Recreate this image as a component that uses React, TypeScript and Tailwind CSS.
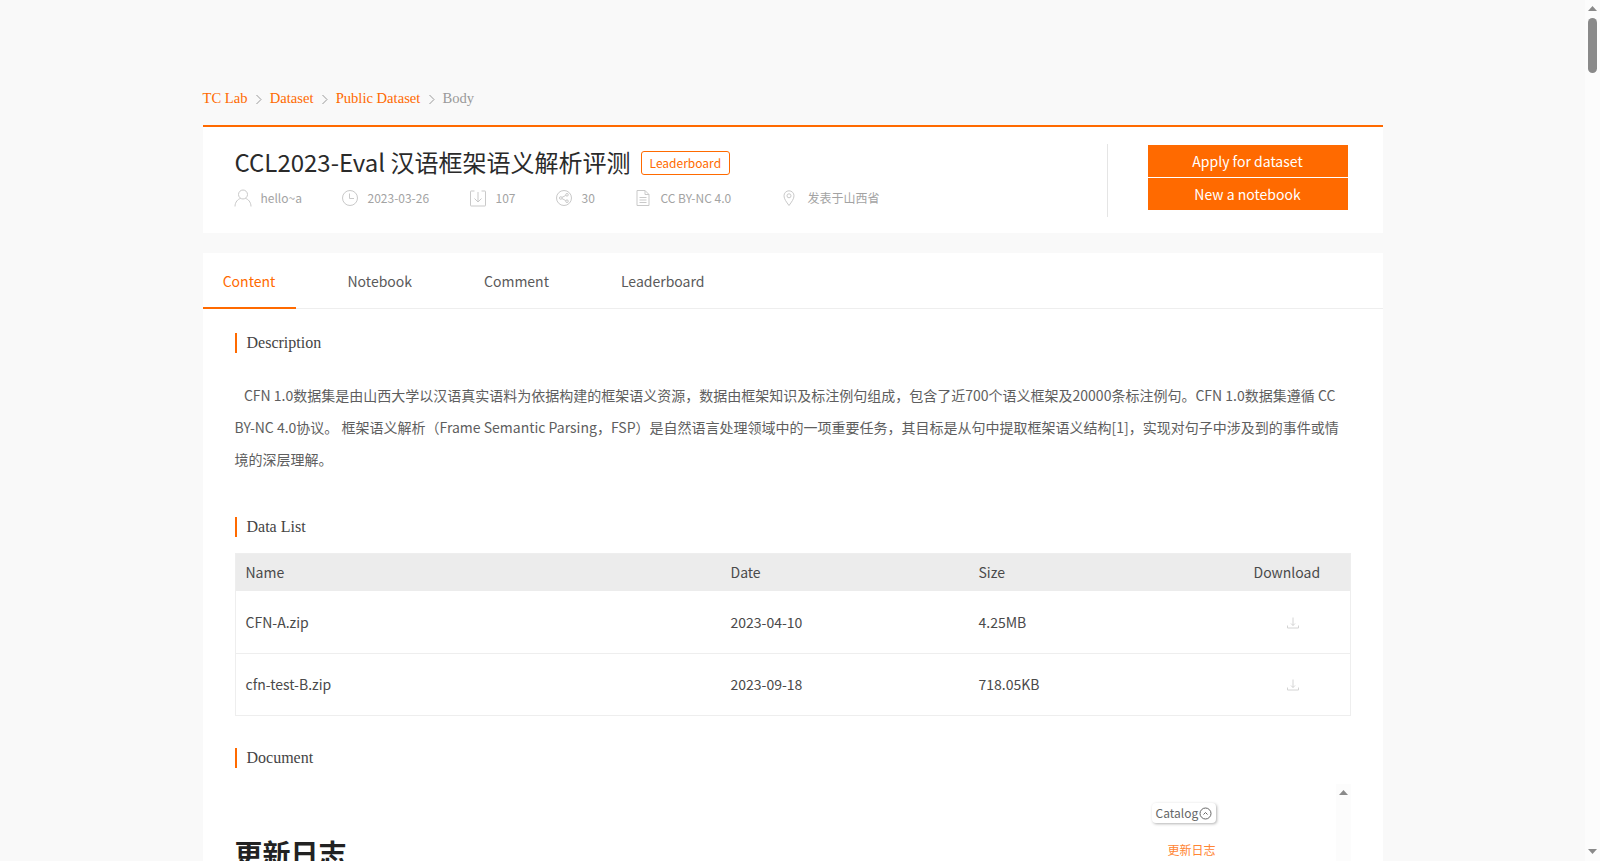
function UserIcon() {
  return (
    <svg width="18" height="18" viewBox="0 0 18 18" fill="none" stroke="#c9c9c9" strokeWidth="1">
      <circle cx="9" cy="5.5" r="4.5" />
      <path d="M1 17.5c0-4.5 3-7.5 5.500-8M17 17.500c0-4.500-3-7.500-5.500-8" />
    </svg>
  );
}

function ClockIcon() {
  return (
    <svg width="18" height="18" viewBox="0 0 18 18" fill="none" stroke="#c9c9c9" strokeWidth="1">
      <circle cx="9" cy="9" r="7.500" />
      <path d="M8.500 4.500v5h4.500" />
    </svg>
  );
}

function DownIcon() {
  return (
    <svg width="18" height="18" viewBox="0 0 18 18" fill="none" stroke="#c9c9c9" strokeWidth="1">
      <path d="M5.500 2H2a.5.5 0 0 0-.5.5V16.500a.5.5 0 0 0 .5.500h14a.5.5 0 0 0 .5-.5V2.500A.5.500 0 0 0 16 2h-3.500" />
      <path d="M9 3v10M5.500 9.500 9 13l3.500-3.500" />
    </svg>
  );
}

function ShareIcon() {
  return (
    <svg width="18" height="18" viewBox="0 0 18 18" fill="none" stroke="#c9c9c9" strokeWidth="1">
      <circle cx="9" cy="9" r="7.500" />
      <circle cx="5.800" cy="9" r="1.300" />
      <circle cx="12" cy="5.800" r="1.300" />
      <circle cx="12" cy="12.200" r="1.300" />
      <path d="M7 8.400 10.800 6.400M7 9.600l3.800 2" />
    </svg>
  );
}

function FileIcon() {
  return (
    <svg width="18" height="18" viewBox="0 0 18 18" fill="none" stroke="#c9c9c9" strokeWidth="1">
      <path d="M3 1.500h8l4 4v11H3zM11 1.500v4h4" />
      <path d="M5.500 8.500h7M5.500 11h7M5.500 13.500h7" />
    </svg>
  );
}

function PinIcon() {
  return (
    <svg width="14" height="18" viewBox="0 0 14 18" fill="none" stroke="#c9c9c9" strokeWidth="1">
      <path d="M7 16.500C4.500 13 2 10 2 6.800a5 5 0 0 1 10 0C12 10 9.500 13 7 16.500z" />
      <circle cx="7" cy="6.800" r="2" />
    </svg>
  );
}

function TrayIcon() {
  return (
    <svg width="14" height="14" viewBox="0 0 14 14" fill="none" stroke="#d4d4d4" strokeWidth="1">
      <path d="M7 1.500v8M5 7.500l2 2 2-2" />
      <path d="M1.500 9.500v2.500h11V9.500" />
    </svg>
  );
}

function Chevron() {
  return (
    <svg width="9" height="11" viewBox="0 0 9 11" fill="none" stroke="#9a9a9a" strokeWidth="1">
      <path d="M2.500 1l4.500 4.500-4.500 4.500" />
    </svg>
  );
}

function ArrowUp() {
  return (
    <svg width="9" height="5" viewBox="0 0 9 5" fill="#8a8a8a">
      <path d="M4.500 0 9 5H0z" />
    </svg>
  );
}

function ArrowDown() {
  return (
    <svg width="9" height="5" viewBox="0 0 9 5" fill="#8a8a8a">
      <path d="M0 0h9L4.500 5z" />
    </svg>
  );
}

function SectionTitle({ children }: { children: string }) {
  return (
    <h3 className="flex h-5 items-center border-l-2 border-[#ff6a00] pl-[10px] font-['Liberation_Serif',serif] text-base text-[#444]">
      {children}
    </h3>
  );
}

const metas = [
  { icon: <UserIcon />, text: "hello~a", cls: "w-[107px] gap-[9px]" },
  { icon: <ClockIcon />, text: "2023-03-26", cls: "w-[128px] gap-[9px]" },
  { icon: <DownIcon />, text: "107", cls: "w-[86px] gap-[9px]" },
  { icon: <ShareIcon />, text: "30", cls: "w-[79px] gap-[9px]" },
  { icon: <FileIcon />, text: "CC BY-NC 4.0", cls: "w-[148px] gap-[9px]" },
  { icon: <PinIcon />, text: "发表于山西省", cls: "w-[120px] gap-3" },
];

const files = [
  { name: "CFN-A.zip", date: "2023-04-10", size: "4.25MB" },
  { name: "cfn-test-B.zip", date: "2023-09-18", size: "718.05KB" },
];

export default function App() {
  return (
    <div className="flex h-screen overflow-hidden bg-[#f9f9f9] font-['Noto_Sans_CJK_SC','Noto_Sans',sans-serif] text-[#333]">
      <main className="min-w-0 flex-1">
        <div className="mx-auto w-[1180px] pt-[89px]">
          <nav className="flex h-5 items-center font-['Liberation_Serif',serif] text-[14.6px] text-[#ff6a00]">
            <span>TC Lab</span>
            <span className="mx-[6.6px]"><Chevron /></span>
            <span>Dataset</span>
            <span className="mx-[6.6px]"><Chevron /></span>
            <span>Public Dataset</span>
            <span className="mx-[6.6px]"><Chevron /></span>
            <span className="text-[#999]">Body</span>
          </nav>

          <section className="mt-4 flex h-[108px] border-t-2 border-[#ff6a00] bg-white pl-8 pr-[35px]">
            <div className="flex-1 pt-[17px]">
              <div className="flex items-center">
                <h1 className="pb-[2px] text-2xl font-normal leading-9 text-[#2a2a2a]">CCL2023-Eval 汉语框架语义解析评测</h1>
                <span className="ml-[10px] rounded-[3px] border border-[#ff6a00] px-2 py-px text-xs leading-[20px] text-[#ff6a00]">Leaderboard</span>
              </div>
              <div className="-ml-px mt-[7px] flex items-center text-xs text-[#a3a3a3]">
                {metas.map((m) => (
                  <div className={`flex items-center ${m.cls}`} key={m.text}>
                    {m.icon}
                    <span>{m.text}</span>
                  </div>
                ))}
              </div>
            </div>
            <div className="mt-[17px] h-[73px] w-px bg-[#e5e5e5]" />
            <div className="ml-10 mt-[18px] flex w-[200px] flex-col gap-px text-sm text-white">
              <button className="h-8 bg-[#ff6a00]" type="button">Apply for dataset</button>
              <button className="h-8 bg-[#ff6a00]" type="button">New a notebook</button>
            </div>
          </section>

          <section className="mt-5 bg-white">
            <div className="flex h-14 border-b border-[#eee] text-sm text-[#5a5a5a]">
              <div className="flex h-14 w-[93px] items-center justify-center border-b-2 border-[#ff6a00] pt-[2px] text-[#ff6a00]">Content</div>
              <div className="ml-[52px] flex items-center">Notebook</div>
              <div className="ml-[72px] flex items-center">Comment</div>
              <div className="ml-[72px] flex items-center">Leaderboard</div>
            </div>

            <div className="px-8">
              <div className="pt-6"><SectionTitle>Description</SectionTitle></div>
              <p className="mt-[26px] text-sm leading-8 text-[#5e5e5e]">
                &nbsp;&nbsp;&nbsp;CFN 1.0数据集是由山西大学以汉语真实语料为依据构建的框架语义资源，数据由框架知识及标注例句组成，包含了近700个语义框架及20000条标注例句。CFN 1.0数据集遵循 CC BY-NC 4.0协议。 框架语义解析（Frame Semantic Parsing，FSP）是自然语言处理领域中的一项重要任务，其目标是从句中提取框架语义结构[1]，实现对句子中涉及到的事件或情境的深层理解。
              </p>

              <div className="mt-[42px]"><SectionTitle>Data List</SectionTitle></div>
              <div className="mt-4 border border-[#eee] text-sm text-[#4a4a4a]">
                <div className="flex h-[37px] items-center bg-[#ececec] pb-[2px] pl-[10px]">
                  <span className="w-[485px]">Name</span>
                  <span className="w-[248px]">Date</span>
                  <span className="w-[275px]">Size</span>
                  <span>Download</span>
                </div>
                {files.map((f, i) => (
                  <div className={`flex h-[62px] items-center pl-[10px] ${i === 0 ? "" : "border-t border-[#eee] pb-[2px]"}`} key={f.name}>
                    <span className="w-[485px]">{f.name}</span>
                    <span className="w-[248px]">{f.date}</span>
                    <span className="w-[275px]">{f.size}</span>
                    <span className="ml-8 mt-[2px]"><TrayIcon /></span>
                  </div>
                ))}
              </div>

              <div className="mt-8"><SectionTitle>Document</SectionTitle></div>
              <div className="mt-4 flex h-[120px] overflow-hidden">
                <div className="flex-1 pt-[49px]">
                  <h1 className="text-[28px] font-bold leading-10 text-[#222]">更新日志</h1>
                </div>
                <div className="w-[184px] pt-[19px]">
                  <div className="flex h-5 w-16 items-center gap-px rounded-sm bg-white pl-1 text-xs text-[#666] shadow-[1px_1px_3px_rgba(0,0,0,0.3)]">
                    Catalog
                    <svg width="13" height="13" viewBox="0 0 13 13" fill="none" stroke="#666" strokeWidth="1">
                      <circle cx="6.500" cy="6.500" r="5.500" />
                      <path d="M4.500 7.500l2-2 2 2" />
                    </svg>
                  </div>
                  <div className="ml-4 mt-[19px] text-xs text-[#ff8533]">更新日志</div>
                </div>
                <div className="flex w-[15px] flex-col items-center bg-[#fcfcfc] pt-[6px]">
                  <ArrowUp />
                </div>
              </div>
            </div>
          </section>
        </div>
      </main>

      <aside className="flex w-[15px] flex-col items-center bg-[#fcfcfc] pb-[7px] pt-[6px]">
        <ArrowUp />
        <div className="mt-[7px] h-[55px] w-[9px] rounded-full bg-[#8a8a8a]" />
        <div className="mt-auto"><ArrowDown /></div>
      </aside>
    </div>
  );
}
